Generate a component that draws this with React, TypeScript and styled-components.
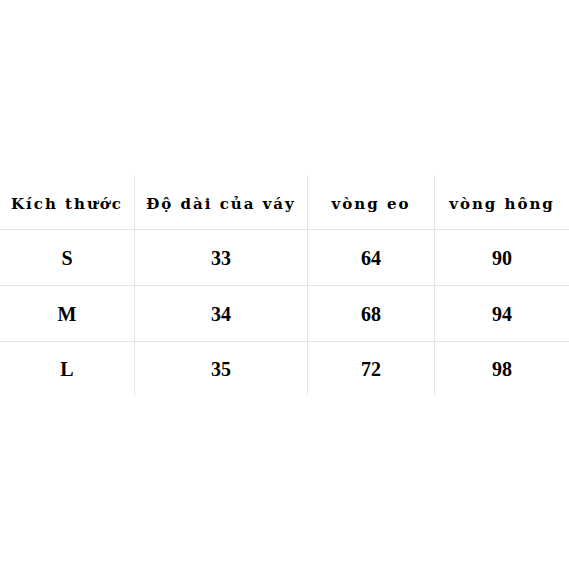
import React from "react";
import styled, { createGlobalStyle } from "styled-components";

const GlobalStyle = createGlobalStyle`
  html, body {
    margin: 0;
    padding: 0;
    background: #ffffff;
  }
`;

const headers = ["Kích thước", "Độ dài của váy", "vòng eo", "vòng hông"];

const rows = [
  ["S", "33", "64", "90"],
  ["M", "34", "68", "94"],
  ["L", "35", "72", "98"],
];

const Page = styled.div`
  width: 569px;
  height: 569px;
  display: flex;
  align-items: center;
  justify-content: center;
`;

const Table = styled.div`
  display: grid;
  grid-template-columns: 134px 173px 127px 135px;
  grid-template-rows: 54px 56px 56px 54px;
  width: 569px;
`;

const Cell = styled.div<{ $first: boolean; $header: boolean }>`
  box-sizing: border-box;
  display: flex;
  align-items: center;
  justify-content: center;
  color: #000;
  border-left: ${(p) => (p.$first ? "none" : "1px solid #e4e4e4")};
  border-top: ${(p) => (p.$header ? "none" : "1px solid #e4e4e4")};
  font-weight: bold;
  font-family: ${(p) =>
    p.$header ? '"DejaVu Serif", serif' : '"Liberation Serif", serif'};
  font-size: ${(p) => (p.$header ? "15px" : "20px")};
  letter-spacing: ${(p) => (p.$header ? "2px" : "0")};
  padding-top: ${(p) => (p.$header ? "4px" : "2px")};
  white-space: pre;
`;

const App = () => {
  return (
    <>
      <GlobalStyle />
      <Page>
        <Table>
          {headers.map((h, i) => (
            <Cell key={h} $first={i === 0} $header>
              {h}
            </Cell>
          ))}
          {rows.map((r) =>
            r.map((v, i) => (
              <Cell key={r[0] + i} $first={i === 0} $header={false}>
                {v}
              </Cell>
            ))
          )}
        </Table>
      </Page>
    </>
  );
};

export default App;
